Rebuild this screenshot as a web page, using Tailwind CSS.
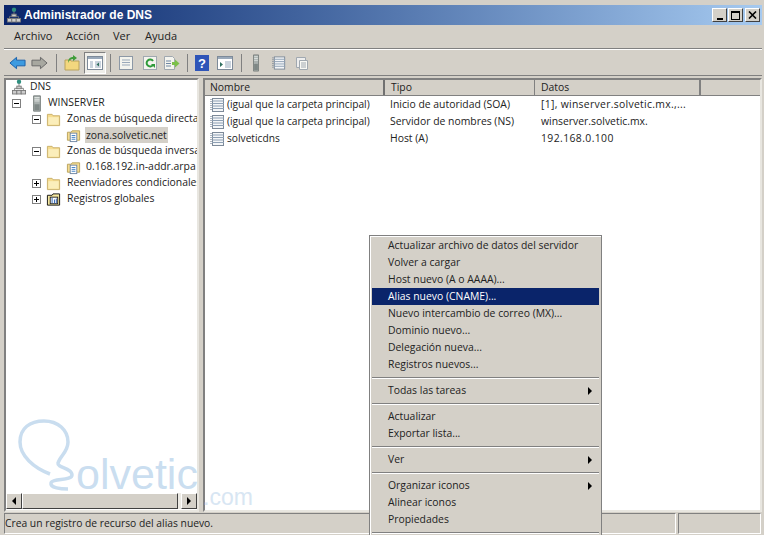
<!DOCTYPE html>
<html lang="es">
<head>
<meta charset="UTF-8">
<title>Administrador de DNS</title>
<script src="https://cdn.jsdelivr.net/npm/@tailwindcss/browser@4"></script>
</head>
<body class="relative w-[764px] h-[535px] overflow-hidden bg-[#d4d0c8] font-['Open_Sans','DejaVu_Sans',sans-serif] text-[10.4px] text-[#222]">

<svg class="hidden">
  <symbol id="doc" viewBox="0 0 16 16">
    <rect x="2.500" y="1.500" width="11" height="13" fill="#f4f6f8" stroke="#7d8a99"/>
    <path d="M2 4h12M2 6.500h12M2 9h12M2 11.500h12" stroke="#8ea0b4"/>
    <path d="M1 2v12" stroke="#5d6d80" stroke-dasharray="1 1"/>
  </symbol>
  <symbol id="folder" viewBox="0 0 16 16">
    <path d="M1.500 2.500h5l1 1.500h7v10.500h-13z" fill="#f6dc8f" stroke="#c9b06a"/>
    <path d="M2.500 5.500h11v8h-11z" fill="#fbeebb"/>
  </symbol>
  <symbol id="zone" viewBox="0 0 16 16">
    <path d="M1.500 4.500h4l1-1.500h8v10h-13z" fill="#f6dc8f" stroke="#b9a25c"/>
    <rect x="4.500" y="5.500" width="7" height="9" fill="#fff" stroke="#6f87a4"/>
    <path d="M6 8h4M6 10h4M6 12h4" stroke="#3d7fc4"/>
  </symbol>
  <symbol id="server" viewBox="0 0 16 20">
    <path d="M4 1h8v18H4z" fill="#a9b0ae" stroke="#6e7674"/>
    <path d="M5 3h6M5 5h6M5 7h6" stroke="#e8ecea"/>
    <path d="M5 11h6v7H5z" fill="#7f8886"/>
  </symbol>
  <symbol id="dns" viewBox="0 0 16 18">
    <circle cx="8" cy="3" r="2.500" fill="#2f8f7f"/>
    <path d="M8 5v5M3 13v-2.500h10V13" stroke="#777" fill="none"/>
    <rect x="5.500" y="8" width="5" height="3" fill="#ccc" stroke="#777"/>
    <rect x="0.500" y="13" width="5" height="4" fill="#ccc" stroke="#777"/>
    <rect x="5.500" y="13" width="5" height="4" fill="#ccc" stroke="#777"/>
    <rect x="10.500" y="13" width="5" height="4" fill="#ccc" stroke="#777"/>
  </symbol>
</svg>

<div class="flex flex-col h-full pt-[5px] pl-[4px] pr-[2px]">
  <!-- title bar -->
  <div class="h-[20px] shrink-0 flex items-center bg-gradient-to-r from-[#0a246a] to-[#a6caf0] pl-[3px] pr-[2px]">
    <svg class="w-[14px] h-[16px]" viewBox="0 0 16 18"><use href="#dns"/></svg>
    <span class="ml-[3px] font-['Liberation_Sans',sans-serif] font-bold text-[12px] text-white">Administrador de DNS</span>
    <div class="ml-auto flex">
      <button class="w-[15px] h-[14px] bg-[#d4d0c8] border border-t-white border-l-white border-r-[#404040] border-b-[#404040] flex items-end justify-center pb-[1px]"><span class="block w-[6px] h-[2px] bg-black"></span></button>
      <button class="w-[15px] h-[14px] ml-[1px] bg-[#d4d0c8] border border-t-white border-l-white border-r-[#404040] border-b-[#404040] flex items-center justify-center"><span class="block w-[9px] h-[9px] border border-t-2 border-black"></span></button>
      <button class="w-[15px] h-[14px] ml-[2px] bg-[#d4d0c8] border border-t-white border-l-white border-r-[#404040] border-b-[#404040] flex items-center justify-center">
        <svg class="w-[9px] h-[8px]" viewBox="0 0 9 8"><path d="M1 0.500l7 7M8 0.500l-7 7" stroke="#000" stroke-width="1.600"/></svg>
      </button>
    </div>
  </div>

  <!-- menu -->
  <nav class="h-[24px] shrink-0 flex items-center pl-[10px] border-b border-b-[#808080] text-[11px]">
    <span class="w-[52px]">Archivo</span>
    <span class="w-[47px]">Acción</span>
    <span class="w-[32px]">Ver</span>
    <span>Ayuda</span>
  </nav>

  <!-- toolbar -->
  <div class="h-[27px] shrink-0 flex items-center pl-[5px] border-t border-t-white border-b border-b-[#808080]">
    <svg class="w-[17px] h-[14px] shrink-0" viewBox="0 0 18 14"><path d="M1 7l7-6v3h9v6H8v3z" fill="#3d9be0" stroke="#1a5fa8"/></svg>
    <svg class="w-[17px] h-[14px] shrink-0 ml-[5px]" viewBox="0 0 18 14"><path d="M17 7l-7-6v3H1v6h9v3z" fill="#a8a8a0" stroke="#666"/></svg>
    <span class="w-px h-[18px] bg-[#808080] ml-[8px]"></span>
    <svg class="w-[16px] h-[16px] shrink-0 ml-[7px]" viewBox="0 0 16 16"><path d="M1 5h5l1 1h8v9H1z" fill="#f3d77e" stroke="#b9a25c"/><path d="M4 8c0-4 2-6 5-6V0l4 3-4 3V4C7 4 5 5 4 8z" fill="#3f9d3a"/></svg>
    <span class="w-[22px] h-[22px] ml-[4px] bg-[#efeee9] border border-t-[#808080] border-l-[#808080] border-r-white border-b-white flex items-center justify-center">
      <svg class="w-[16px] h-[14px]" viewBox="0 0 16 14"><rect x="0.500" y="0.500" width="15" height="13" fill="#fff" stroke="#7d8a99"/><path d="M1 1h14v2H1z" fill="#9aa9ba"/><path d="M3 5h3v7H3zM8 5h6v7H8z" fill="#c9d3dd"/><path d="M12 6.500L9.500 8.500 12 10.500z" fill="#2f6f5f"/></svg>
    </span>
    <span class="w-px h-[18px] bg-[#808080] ml-[4px]"></span>
    <svg class="w-[16px] h-[16px] shrink-0 ml-[7px]" viewBox="0 0 16 16"><rect x="1.500" y="1.500" width="13" height="13" fill="#f4f4ee" stroke="#8c98a6"/><path d="M4 5h8M4 7.500h8M4 10h8" stroke="#9aa9ba"/></svg>
    <svg class="w-[16px] h-[16px] shrink-0 ml-[8px]" viewBox="0 0 16 16"><rect x="1.500" y="1.500" width="13" height="13" fill="#f4f4ee" stroke="#a0a8b0"/><path d="M11 6a3.500 3.500 0 1 0 0 4" fill="none" stroke="#2f9a3a" stroke-width="2"/><path d="M9 9h4v4z" fill="#2f9a3a"/></svg>
    <svg class="w-[17px] h-[16px] shrink-0 ml-[5px]" viewBox="0 0 17 16"><path d="M1.500 1.500h8l2 2v11h-10z" fill="#f4f4ee" stroke="#a0a8b0"/><path d="M3 6h5M3 8.500h5M3 11h5" stroke="#6f87a4"/><path d="M9 7h3V4.500L16.500 8.500 12 12.500V10H9z" fill="#7cc04a"/></svg>
    <span class="w-px h-[18px] bg-[#808080] ml-[7px]"></span>
    <svg class="w-[14px] h-[16px] shrink-0 ml-[7px]" viewBox="0 0 14 16"><rect width="14" height="16" fill="#2f55b8"/><text x="7" y="13" font-size="13" font-weight="700" text-anchor="middle" fill="#fff" font-family="Liberation Sans">?</text></svg>
    <svg class="w-[16px] h-[14px] shrink-0 ml-[8px]" viewBox="0 0 16 14"><rect x="0.500" y="0.500" width="15" height="13" fill="#fff" stroke="#7d8a99"/><path d="M1 1h14v2H1z" fill="#9aa9ba"/><path d="M8 5h6v7H8z" fill="#c9d3dd"/><path d="M3 6l3 2.500-3 2.500z" fill="#2f6f5f"/></svg>
    <span class="w-px h-[18px] bg-[#808080] ml-[8px]"></span>
    <svg class="w-[10px] h-[18px] shrink-0 ml-[9px]" viewBox="0 0 16 20" preserveAspectRatio="none"><use href="#server"/></svg>
    <svg class="w-[15px] h-[16px] shrink-0 ml-[11px]" viewBox="0 0 16 16"><use href="#doc"/></svg>
    <svg class="w-[14px] h-[16px] shrink-0 ml-[8px]" viewBox="0 0 14 16"><path d="M1.500 2.500h9v10h-9z" fill="#eee" stroke="#a0a8b0"/><path d="M4.500 5.500h8v9h-8z" fill="#f8f8f4" stroke="#a0a8b0"/><path d="M6 8h5M6 10h5M6 12h5" stroke="#a0a8b0"/></svg>
  </div>

  <!-- panes -->
  <div class="flex-1 min-h-0 flex pt-[2px] pb-[1px]">
    <!-- tree -->
    <div class="w-[195px] shrink-0 flex flex-col bg-white border-2 border-t-[#808080] border-l-[#808080] border-r-[#e8e6e0] border-b-[#e8e6e0]">
      <ul class="flex-1 pl-[3px] -mt-px whitespace-nowrap overflow-hidden">
        <li class="h-[16px] flex items-center pl-[3px]">
          <svg class="w-[14px] h-[16px] shrink-0" viewBox="0 0 16 18"><use href="#dns"/></svg><span class="ml-[4px]">DNS</span>
        </li>
        <li class="h-[16px] flex items-center pl-[3px]">
          <span class="w-[9px] h-[9px] shrink-0 border border-[#808080] flex items-center justify-center"><span class="block w-[5px] h-px bg-black"></span></span>
          <svg class="w-[14px] h-[17px] shrink-0 ml-[9px]" viewBox="0 0 16 20"><use href="#server"/></svg><span class="ml-[4px]">WINSERVER</span>
        </li>
        <li class="h-[16px] flex items-center pl-[23px]">
          <span class="w-[9px] h-[9px] shrink-0 border border-[#808080] flex items-center justify-center"><span class="block w-[5px] h-px bg-black"></span></span>
          <svg class="w-[15px] h-[15px] shrink-0 ml-[5px]" viewBox="0 0 16 16"><use href="#folder"/></svg><span class="ml-[6px]">Zonas de búsqueda directa</span>
        </li>
        <li class="h-[16px] flex items-center pl-[57px]">
          <svg class="w-[15px] h-[15px] shrink-0" viewBox="0 0 16 16"><use href="#zone"/></svg><span class="ml-[4px] px-[1px] h-[16px] leading-[16px] bg-[#d4d0c8]">zona.solvetic.net</span>
        </li>
        <li class="h-[16px] flex items-center pl-[23px]">
          <span class="w-[9px] h-[9px] shrink-0 border border-[#808080] flex items-center justify-center"><span class="block w-[5px] h-px bg-black"></span></span>
          <svg class="w-[15px] h-[15px] shrink-0 ml-[5px]" viewBox="0 0 16 16"><use href="#folder"/></svg><span class="ml-[6px]">Zonas de búsqueda inversa</span>
        </li>
        <li class="h-[16px] flex items-center pl-[57px]">
          <svg class="w-[15px] h-[15px] shrink-0" viewBox="0 0 16 16"><use href="#zone"/></svg><span class="ml-[5px]">0.168.192.in-addr.arpa</span>
        </li>
        <li class="h-[16px] flex items-center pl-[23px]">
          <span class="w-[9px] h-[9px] shrink-0 border border-[#808080] relative flex items-center justify-center"><span class="block w-[5px] h-px bg-black"></span><span class="absolute block w-px h-[5px] bg-black"></span></span>
          <svg class="w-[15px] h-[15px] shrink-0 ml-[5px]" viewBox="0 0 16 16"><use href="#folder"/></svg><span class="ml-[6px]">Reenviadores condicionales</span>
        </li>
        <li class="h-[16px] flex items-center pl-[23px]">
          <span class="w-[9px] h-[9px] shrink-0 border border-[#808080] relative flex items-center justify-center"><span class="block w-[5px] h-px bg-black"></span><span class="absolute block w-px h-[5px] bg-black"></span></span>
          <svg class="w-[15px] h-[15px] shrink-0 ml-[5px]" viewBox="0 0 16 16"><path d="M1.500 3.500h5l1-1.500h7v12h-13z" fill="#f6e9a0" stroke="#111"/><rect x="4.500" y="5.500" width="8" height="7" fill="#fff" stroke="#222"/><path d="M6.500 6v6M9 8v4M11 7v5" stroke="#2a5fb0"/></svg><span class="ml-[6px]">Registros globales</span>
        </li>
      </ul>
      <!-- scrollbar -->
      <div class="h-[16px] shrink-0 flex bg-[#eceae4] mb-[1px]">
        <button class="w-[16px] bg-[#d4d0c8] border border-t-white border-l-white border-r-[#404040] border-b-[#404040] flex items-center justify-center"><span class="block border-y-[4px] border-y-transparent border-r-[4px] border-r-black"></span></button>
        <div class="w-[156px] bg-[#d4d0c8] border border-t-white border-l-white border-r-[#404040] border-b-[#404040]"></div>
        <div class="flex-1"></div>
        <button class="w-[16px] bg-[#d4d0c8] border border-t-white border-l-white border-r-[#404040] border-b-[#404040] flex items-center justify-center"><span class="block border-y-[4px] border-y-transparent border-l-[4px] border-l-black"></span></button>
      </div>
    </div>

    <!-- record list -->
    <div class="ml-[4px] flex-1 flex flex-col bg-white border-2 border-t-[#808080] border-l-[#808080] border-r-[#e8e6e0] border-b-[#e8e6e0]">
      <div class="h-[16px] shrink-0 flex bg-[#d4d0c8] border-b border-b-[#808080]">
        <div class="w-[180px] pl-[5px] leading-[15px] border-r-2 border-r-[#707070]">Nombre</div>
        <div class="w-[150px] pl-[6px] leading-[15px] border-r border-r-[#808080]">Tipo</div>
        <div class="w-[166px] pl-[6px] leading-[15px] border-r-2 border-r-[#808080]">Datos</div>
      </div>
      <div class="whitespace-nowrap">
        <div class="h-[17px] flex items-center">
          <div class="w-[180px] flex items-center pl-[5px] text-[10.2px]"><svg class="w-[16px] h-[16px] shrink-0" viewBox="0 0 16 16"><use href="#doc"/></svg><span class="ml-[1px]">(igual que la carpeta principal)</span></div>
          <div class="w-[150px] pl-[5px]">Inicio de autoridad (SOA)</div>
          <div class="pl-[6px] tracking-[0.3px]">[1], winserver.solvetic.mx.,...</div>
        </div>
        <div class="h-[17px] flex items-center">
          <div class="w-[180px] flex items-center pl-[5px] text-[10.2px]"><svg class="w-[16px] h-[16px] shrink-0" viewBox="0 0 16 16"><use href="#doc"/></svg><span class="ml-[1px]">(igual que la carpeta principal)</span></div>
          <div class="w-[150px] pl-[5px]">Servidor de nombres (NS)</div>
          <div class="pl-[6px]">winserver.solvetic.mx.</div>
        </div>
        <div class="h-[17px] flex items-center">
          <div class="w-[180px] flex items-center pl-[5px] text-[10.2px]"><svg class="w-[16px] h-[16px] shrink-0" viewBox="0 0 16 16"><use href="#doc"/></svg><span class="ml-[1px]">solveticdns</span></div>
          <div class="w-[150px] pl-[5px]">Host (A)</div>
          <div class="pl-[6px] tracking-[0.4px]">192.168.0.100</div>
        </div>
      </div>
    </div>
  </div>

  <!-- status bar -->
  <div class="h-[21px] shrink-0 mb-[1px] flex gap-[2px] pr-[1px]">
    <div class="flex-1 leading-[18px] text-[10.3px] border border-t-[#808080] border-l-[#808080] border-r-white border-b-white">Crea un registro de recurso del alias nuevo.</div>
    <div class="w-[76px] border border-t-[#808080] border-l-[#808080] border-r-white border-b-white"></div>
    <div class="w-[83px] border border-t-[#808080] border-l-[#808080] border-r-white border-b-white"></div>
  </div>
</div>

<!-- solvetic watermark -->
<div class="absolute left-[16px] top-[418px] w-[240px] h-[100px] pointer-events-none">
  <svg class="absolute left-0 top-0 w-[70px] h-[80px]" viewBox="0 0 70 80" fill="none"><path d="M34 56C18 50 4 38 4 24 4 10 14 3 28 3c14 0 24 9 24 21 0 10-8 14-10 21-1 5 14 5 14 12 0 6-20 3-21 8-1 5 10 6 17 6" stroke="#c9ddef" stroke-width="3.500"/></svg>
  <span class="absolute left-[60px] top-[31px] font-['Liberation_Sans',sans-serif] text-[43px] leading-[50px] text-[#bcd5ec]/80">olvetic</span>
  <span class="absolute left-[187px] top-[65px] font-['Liberation_Sans',sans-serif] text-[23px] leading-[28px] text-[#d8e6f3]">.com</span>
</div>

<!-- context menu -->
<div class="absolute left-[369px] top-[235px] w-[233px] h-[302px] bg-[#d4d0c8] border border-[#808080] px-[2px] pt-[1px] shadow-[inset_1px_1px_0_#fff]">
  <div class="h-[17px] leading-[17px] pl-[16px]">Actualizar archivo de datos del servidor</div>
  <div class="h-[17px] leading-[17px] pl-[16px]">Volver a cargar</div>
  <div class="h-[17px] leading-[17px] pl-[16px]">Host nuevo (A o AAAA)...</div>
  <div class="h-[17px] leading-[17px] pl-[16px] bg-[#0a246a] text-white">Alias nuevo (CNAME)...</div>
  <div class="h-[17px] leading-[17px] pl-[16px]">Nuevo intercambio de correo (MX)...</div>
  <div class="h-[17px] leading-[17px] pl-[16px]">Dominio nuevo...</div>
  <div class="h-[17px] leading-[17px] pl-[16px]">Delegación nueva...</div>
  <div class="h-[17px] leading-[17px] pl-[16px]">Registros nuevos...</div>
  <div class="h-[9px] flex items-center"><div class="w-full h-[2px] border-t border-t-[#808080] border-b border-b-white"></div></div>
  <div class="h-[17px] leading-[17px] pl-[16px] pr-[7px] flex items-center justify-between">Todas las tareas<span class="border-y-[4px] border-y-transparent border-l-[4px] border-l-black"></span></div>
  <div class="h-[9px] flex items-center"><div class="w-full h-[2px] border-t border-t-[#808080] border-b border-b-white"></div></div>
  <div class="h-[17px] leading-[17px] pl-[16px]">Actualizar</div>
  <div class="h-[17px] leading-[17px] pl-[16px]">Exportar lista...</div>
  <div class="h-[9px] flex items-center"><div class="w-full h-[2px] border-t border-t-[#808080] border-b border-b-white"></div></div>
  <div class="h-[17px] leading-[17px] pl-[16px] pr-[7px] flex items-center justify-between">Ver<span class="border-y-[4px] border-y-transparent border-l-[4px] border-l-black"></span></div>
  <div class="h-[9px] flex items-center"><div class="w-full h-[2px] border-t border-t-[#808080] border-b border-b-white"></div></div>
  <div class="h-[17px] leading-[17px] pl-[16px] pr-[7px] flex items-center justify-between">Organizar iconos<span class="border-y-[4px] border-y-transparent border-l-[4px] border-l-black"></span></div>
  <div class="h-[17px] leading-[17px] pl-[16px]">Alinear iconos</div>
  <div class="h-[17px] leading-[17px] pl-[16px]">Propiedades</div>
  <div class="h-[9px] flex items-center"><div class="w-full h-[2px] border-t border-t-[#808080] border-b border-b-white"></div></div>
</div>

</body>
</html>
